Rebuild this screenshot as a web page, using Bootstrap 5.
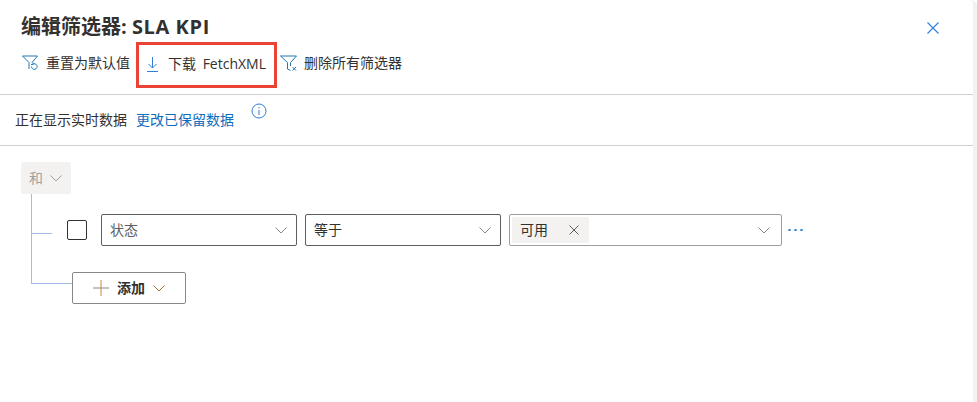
<!DOCTYPE html>
<html lang="zh"><head><meta charset="utf-8">
<link href="https://cdn.jsdelivr.net/npm/bootstrap@5.3.0/dist/css/bootstrap.min.css" rel="stylesheet">
<style>
html,body{height:100%;overflow:hidden;background:#fff}
body{font-family:"Open Sans","Noto Sans CJK SC",sans-serif;color:#323130;font-size:14px;line-height:18px}
.pane{height:402px;width:973px;border-right:4px solid #f3f2f1;box-sizing:content-box;border-top-right-radius:6px;overflow:hidden}
.pane-head{height:42px;padding:14px 0 0 21px}
.pane-title{font-size:20px;line-height:26px;font-weight:700;margin:0;color:#323130}
.title-latin{letter-spacing:.6px}
.close-x{position:absolute;left:927px;top:22px}
.cmdbar{height:53px;border-bottom:1px solid #d2d0ce;padding-left:21px}
.cmd{display:flex;align-items:center;color:#323130;white-space:nowrap;height:42px}
.cmd-reset{width:115px;gap:8px;padding-left:1px}
.cmd-dl{height:46px;width:141px;border:3px solid #ea4335;padding:0 0 3px 8px;gap:10px;word-spacing:3px}
.cmd-del{margin-left:3px;gap:7px}
.infobar{height:51px;border-bottom:1px solid #d2d0ce;padding:16px 0 0 15px;gap:9px}
.infobar a{color:#0f6cbd;text-decoration:none}
.info-i{margin:-8px 0 0 8px}
.filter-area{position:relative;padding:16px 0 0 21px}
.and-box{width:50px;height:32px;background:#f3f2f1;border-radius:2px;color:#a19f9d;padding-left:8px;gap:7px}
.tree-v{position:absolute;left:31px;top:48px;width:1px;height:90px;background:#a4bbe8}
.tree-h1{position:absolute;left:31px;top:87px;width:21px;height:1px;background:#a4bbe8}
.tree-h2{position:absolute;left:31px;top:137px;width:41px;height:1px;background:#a4bbe8}
.cond-row{margin-top:20px;height:32px;padding-left:46px}
.chk{width:20px;height:20px;border:1px solid #323130;border-radius:2px;margin-right:14px;flex:none}
.fld{height:32px;border:1px solid #605e5c;border-radius:2px;padding:0 9px 0 8px;flex:none;color:#605e5c}
.fld-a{width:196px}
.fld-b{width:196px;margin-left:8px;color:#323130}
.fld-c{width:273px;margin-left:8px;border-color:#a19f9d;padding:0 11px 0 2px;color:#323130}
.tag{width:77px;height:26px;background:#f3f2f1;border-radius:2px;padding:0 10px 0 8px;color:#323130}
.more{margin-left:6px;gap:3px}
.more i{display:block;width:3px;height:2px;background:#2f7fd6;border-radius:50%}
.add-btn{margin:26px 0 0 51px;width:114px;height:32px;border:1px solid #8a8886;border-radius:2px;padding-left:20px;font-weight:700;color:#323130}
</style></head><body>
<div class="pane position-relative">
<div class="pane-head"><h1 class="pane-title">编辑筛选器: <span class="title-latin">SLA KPI</span></h1></div>
<svg class="close-x" width="12" height="12" viewBox="0 0 12 12"><path d="M.5.5l11 11M11.500.5l-11 11" stroke="#2f7fd6" stroke-width="1.1" fill="none"/></svg>
<div class="cmdbar d-flex align-items-start">
<div class="cmd cmd-reset"><svg width="16" height="16" viewBox="0 0 16 16" fill="none"><path d="M.5 1h15L10 7.500M7 14V7.500L.5 1" stroke="#1f78b4"/><path d="M9.500 11.500a2.800 2.800 0 1 0 1.100-2.200" stroke="#1f78b4"/><path d="M11 7.500v2H9" stroke="#1f78b4"/></svg><span>重置为默认值</span></div>
<div class="cmd cmd-dl"><svg width="11" height="16" viewBox="0 0 11 16" fill="none"><path d="M5.500 1v11M1.500 8l4 4 4-4M0 15.500h11" stroke="#2f7fd6"/></svg><span>下载 FetchXML</span></div>
<div class="cmd cmd-del"><svg width="17" height="16" viewBox="0 0 17 16" fill="none"><path d="M.5 1h16L10.500 7.500V11M7.500 14V7.500L.5 1M7.500 14l3 1.500" stroke="#1f78b4"/><path d="M12.500 12l3.500 3.500M16 12l-3.500 3.500" stroke="#1f78b4"/></svg><span>删除所有筛选器</span></div>
</div>
<div class="infobar d-flex align-items-start"><span>正在显示实时数据</span><a href="#">更改已保留数据</a><svg class="info-i" width="16" height="16" viewBox="0 0 16 16" fill="none"><circle cx="8" cy="8" r="7" stroke="#2f7fd6"/><path d="M8 7v5M8 4v1.400" stroke="#2f7fd6"/></svg></div>
<div class="filter-area">
<div class="tree-v"></div><div class="tree-h1"></div><div class="tree-h2"></div>
<div class="and-box d-flex align-items-center"><span>和</span><svg width="12" height="7" viewBox="0 0 12 7" fill="none"><path d="M.5.5L6 6 11.500.5" stroke="#a19f9d"/></svg></div>
<div class="cond-row d-flex align-items-center">
<div class="chk"></div>
<div class="fld fld-a d-flex align-items-center justify-content-between"><span>状态</span><svg width="12" height="7" viewBox="0 0 12 7" fill="none"><path d="M.5.5L6 6 11.500.5" stroke="#8a8886"/></svg></div>
<div class="fld fld-b d-flex align-items-center justify-content-between"><span>等于</span><svg width="12" height="7" viewBox="0 0 12 7" fill="none"><path d="M.5.5L6 6 11.500.5" stroke="#8a8886"/></svg></div>
<div class="fld fld-c d-flex align-items-center justify-content-between"><div class="tag d-flex align-items-center justify-content-between"><span>可用</span><svg width="10" height="10" viewBox="0 0 10 10" fill="none"><path d="M.5.5l9 9M9.500.5l-9 9" stroke="#605e5c"/></svg></div><svg width="12" height="7" viewBox="0 0 12 7" fill="none"><path d="M.5.5L6 6 11.500.5" stroke="#8a8886"/></svg></div>
<div class="more d-flex"><i></i><i></i><i></i></div>
</div>
<div class="add-btn d-flex align-items-center"><svg width="16" height="16" viewBox="0 0 16 16" fill="none"><path d="M0 8h16" stroke="#8a8886"/><path d="M8 0v16" stroke="#c98a3c"/></svg><span class="ms-2">添加</span><svg class="ms-2" width="12" height="7" viewBox="0 0 12 7" fill="none"><path d="M.5.5L6 6 11.500.5" stroke="#a5743a"/></svg></div>
</div>
</div>
</body></html>
